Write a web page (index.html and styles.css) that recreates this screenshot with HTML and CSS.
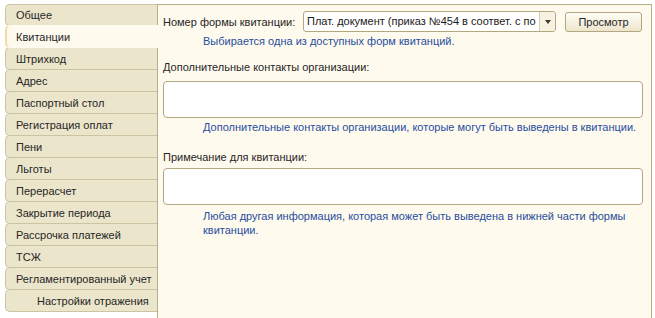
FILE: index.html
```html
<!DOCTYPE html>
<html>
<head>
<title>Настройки квитанций</title>
<meta charset="UTF-8">
<link rel="stylesheet" href="styles.css">
</head>
<body>
<div id="frame">

	<div id="tabs">
		<div class="tab">Общее</div>
		<div class="tab active">Квитанции</div>
		<div class="tab">Штрихкод</div>
		<div class="tab">Адрес</div>
		<div class="tab">Паспортный стол</div>
		<div class="tab">Регистрация оплат</div>
		<div class="tab">Пени</div>
		<div class="tab">Льготы</div>
		<div class="tab">Перерасчет</div>
		<div class="tab">Закрытие периода</div>
		<div class="tab">Рассрочка платежей</div>
		<div class="tab">ТСЖ</div>
		<div class="tab">Регламентированный учет</div>
		<div class="tab sub">Настройки отражения</div>
	</div>

	<div id="panel">
		<div class="row">
			<span class="label">Номер формы квитанции:</span>
			<div class="combo">
				<span class="combo_text">Плат. документ (приказ №454 в соответ. с по</span>
				<span class="combo_btn"><span class="arrow"></span></span>
			</div>
			<button class="btn">Просмотр</button>
		</div>
		<div class="hint">Выбирается одна из доступных форм квитанций.</div>

		<div class="label block">Дополнительные контакты организации:</div>
		<div class="memo"></div>
		<div class="hint">Дополнительные контакты организации, которые могут быть выведены в квитанции.</div>

		<div class="label block second">Примечание для квитанции:</div>
		<div class="memo memo2"></div>
		<div class="hint hint2">Любая другая информация, которая может быть выведена в нижней части формы квитанции.</div>
	</div>

</div>
</body>
</html>
```

FILE: styles.css
```css
html, body {
	margin: 0;
	background-color: #FFFFFF;
}

body {
	font-family: "Liberation Sans", Arial, sans-serif;
	font-size: 11px;
	color: #262626;
}

#frame {
	display: flex;
	padding: 4px 3px 0 5px;
	height: 314px;
}

/**************************
/******TABS
/**/
#tabs {
	width: 152px;
	flex: none;
	display: flex;
	flex-direction: column;
}

.tab {
	box-sizing: border-box;
	height: 23px;
	margin-top: -1px;
	padding: 0 0 0 10px;
	display: flex;
	align-items: center;
	background-color: #EBE5CB;
	border: 1px solid #CCC3A0;
	border-right: none;
	border-radius: 5px 0 0 5px;
	white-space: nowrap;
}

.tab:first-child {
	margin-top: 0;
	height: 22px;
}

.tab.active {
	background-color: #FFFAEE;
	border-color: #FFFAEE;
	border-left: 2px solid #F3D9A4;
	padding-left: 9px;
	margin-right: -1px;
	position: relative;
	z-index: 1;
}

.tab.sub {
	padding-left: 31px;
}

/**************************
/******PANEL
/**/
#panel {
	flex: 1;
	background-color: #FFFAEE;
	border: 1px solid #B9AE86;
	border-bottom: none;
	padding: 6px 8px 0 5px;
}

.row {
	display: flex;
	align-items: center;
	height: 21px;
}

.label {
	width: 140px;
	flex: none;
	white-space: nowrap;
}

.label.block {
	width: auto;
	margin-top: 12px;
	line-height: 14px;
}

.label.second {
	margin-top: 16px;
}

.combo {
	box-sizing: border-box;
	width: 253px;
	height: 21px;
	display: flex;
	background-color: #FFFFFF;
	border: 1px solid #B3A780;
	border-radius: 3px;
	overflow: hidden;
}

.combo_text {
	flex: 1;
	padding: 0 0 0 3px;
	line-height: 19px;
	white-space: nowrap;
	overflow: hidden;
	color: #1A1A1A;
}

.combo_btn {
	width: 15px;
	flex: none;
	border-left: 1px solid #D5CDB0;
	background-color: #F6F1E0;
	display: flex;
	align-items: center;
	justify-content: center;
}

.arrow {
	width: 0;
	height: 0;
	border-left: 3px solid transparent;
	border-right: 3px solid transparent;
	border-top: 4px solid #3F3A2C;
}

.btn {
	margin-left: 9px;
	width: 77px;
	height: 20px;
	font-family: "Liberation Sans", Arial, sans-serif;
	font-size: 11px;
	color: #262626;
	background: linear-gradient(#FFFDF6, #EDE6CD);
	border: 1px solid #B3A780;
	border-radius: 3px;
	padding: 0;
}

.hint {
	color: #1F4E9F;
	padding: 3px 0 0 40px;
	line-height: 13px;
}

.hint2 {
	padding-top: 4px;
	line-height: 14px;
}

.memo {
	box-sizing: border-box;
	margin-top: 7px;
	height: 37px;
	background-color: #FFFFFF;
	border: 1px solid #B3A780;
	border-radius: 4px;
}

.memo2 {
	margin-top: 4px;
}
```
